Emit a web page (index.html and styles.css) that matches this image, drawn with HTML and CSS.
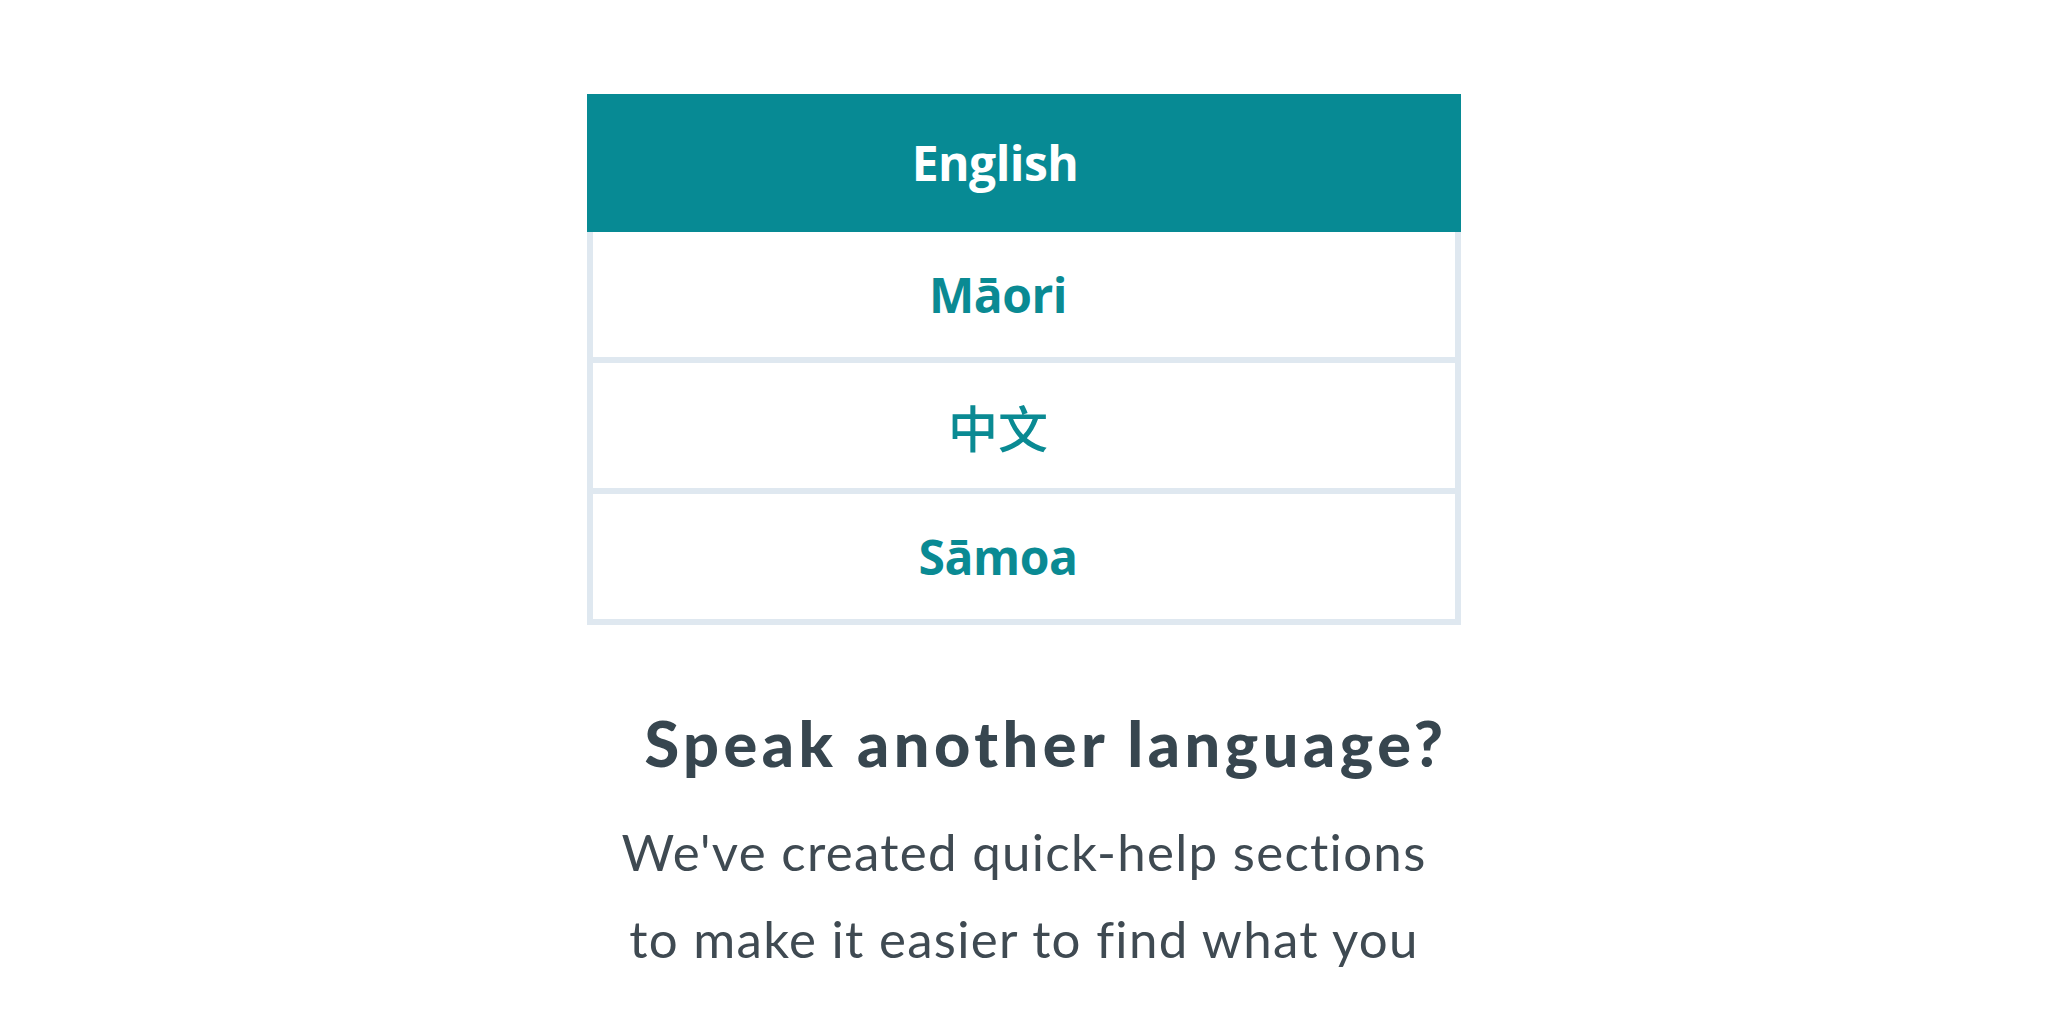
FILE: index.html
```html
<!DOCTYPE html>
<html lang="en">
<head>
<meta charset="utf-8">
<title>Languages</title>
<link rel="stylesheet" href="styles.css">
</head>
<body>
<main class="page">
  <nav class="lang-list">
    <a class="lang-item active" href="#">English</a>
    <a class="lang-item" href="#">Māori</a>
    <a class="lang-item cjk" href="#" lang="zh">中文</a>
    <a class="lang-item" href="#">Sāmoa</a>
  </nav>
  <section class="intro">
    <h2 class="intro-title">Speak another language?</h2>
    <p class="intro-text">We've created quick-help sections<br>to make it easier to find what you</p>
  </section>
</main>
</body>
</html>
```
FILE: styles.css
```css
html, body {
  margin: 0;
  padding: 0;
  background: #ffffff;
}

.page {
  display: flex;
  flex-direction: column;
  align-items: center;
  padding-top: 94px;
}

.lang-list {
  width: 874px;
  display: flex;
  flex-direction: column;
}

.lang-item {
  box-sizing: border-box;
  display: flex;
  align-items: center;
  justify-content: center;
  height: 131px;
  padding-right: 52px;
  border: 6px solid #dfe8f0;
  border-top: none;
  background: #ffffff;
  color: #0a8a93;
  font-family: "Open Sans", "Noto Sans", sans-serif;
  font-weight: 700;
  font-size: 48px;
  letter-spacing: -0.5px;
  text-decoration: none;
  line-height: 1;
}

.lang-item.active {
  height: 138px;
  border: none;
  padding-right: 58px;
  background: #078a94;
  color: #ffffff;
}

.lang-item.cjk {
  font-family: "Noto Sans CJK SC", "Noto Sans", sans-serif;
  font-weight: 500;
  font-size: 50px;
  letter-spacing: 0;
}

.intro {
  display: flex;
  flex-direction: column;
  align-items: center;
  margin-top: 86px;
}

.intro-title {
  margin: 0;
  padding-left: 44px;
  font-family: "Lato", "Noto Sans", sans-serif;
  font-weight: 900;
  font-size: 63px;
  line-height: 64px;
  letter-spacing: 4.5px;
  color: #37464f;
}

.intro-text {
  margin: 33px 0 0;
  text-align: center;
  font-family: "Lato", "Noto Sans", sans-serif;
  font-weight: 400;
  font-size: 51px;
  line-height: 87px;
  letter-spacing: 1.3px;
  color: #3f4a52;
}
```
